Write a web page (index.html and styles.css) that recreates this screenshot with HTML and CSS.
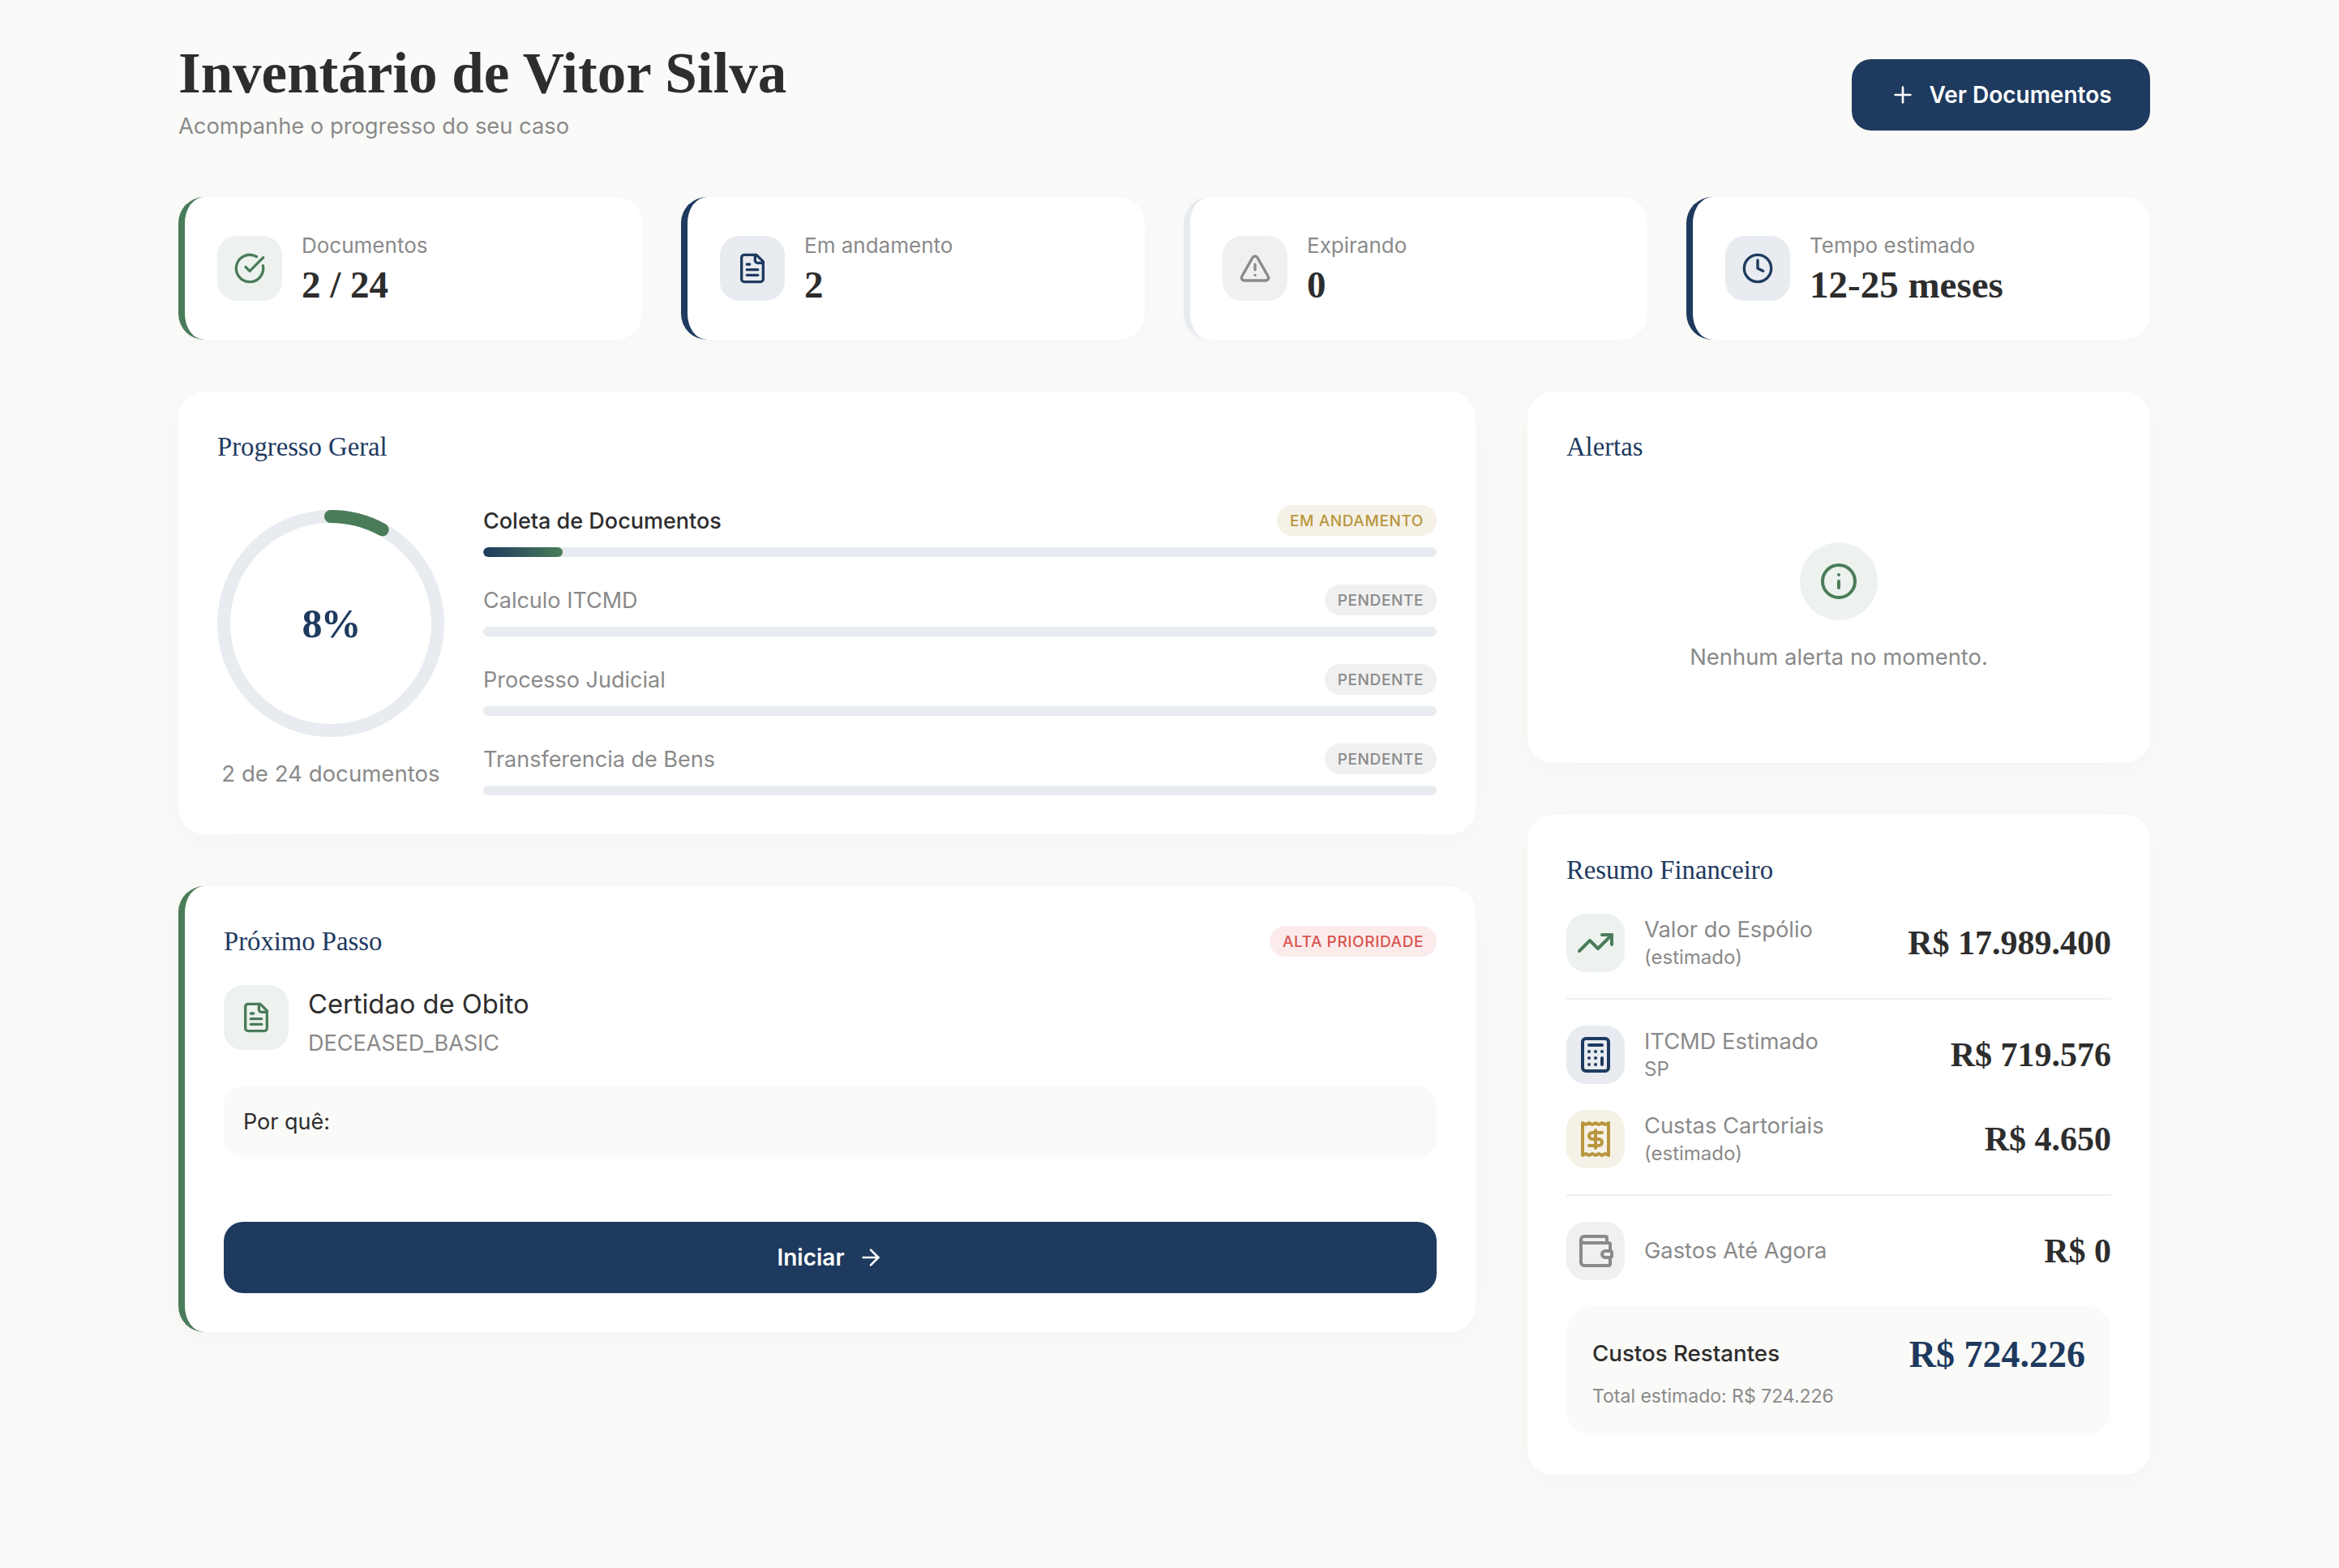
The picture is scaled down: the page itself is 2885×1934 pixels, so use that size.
FILE: index.html
```html
<!DOCTYPE html>
<html lang="pt-BR">

<head>
    <meta charset="UTF-8">
    <title>Inventário de Vitor Silva</title>
    <link rel="stylesheet" href="styles.css">
</head>

<body>
    <div class="page">
        <header class="page-header">
            <div class="title-block">
                <h1>Inventário de Vitor Silva</h1>
                <p class="subtitle">Acompanhe o progresso do seu caso</p>
            </div>
            <button class="btn header-btn">
                <svg class="icon icon-sm" viewBox="0 0 24 24"><path d="M5 12h14"/><path d="M12 5v14"/></svg>
                Ver Documentos
            </button>
        </header>

        <section class="stats">
            <div class="stat-card border-green">
                <div class="icon-box box-green">
                    <svg class="icon" viewBox="0 0 24 24"><path d="M21.801 10A10 10 0 1 1 17 3.335"/><path d="m9 11 3 3L22 4"/></svg>
                </div>
                <div>
                    <p class="stat-label">Documentos</p>
                    <p class="stat-value">2 / 24</p>
                </div>
            </div>
            <div class="stat-card border-navy">
                <div class="icon-box box-navy">
                    <svg class="icon" viewBox="0 0 24 24"><path d="M15 2H6a2 2 0 0 0-2 2v16a2 2 0 0 0 2 2h12a2 2 0 0 0 2-2V7Z"/><path d="M14 2v4a2 2 0 0 0 2 2h4"/><path d="M10 9H8"/><path d="M16 13H8"/><path d="M16 17H8"/></svg>
                </div>
                <div>
                    <p class="stat-label">Em andamento</p>
                    <p class="stat-value">2</p>
                </div>
            </div>
            <div class="stat-card border-grey">
                <div class="icon-box box-grey">
                    <svg class="icon" viewBox="0 0 24 24"><path d="m21.73 18-8-14a2 2 0 0 0-3.48 0l-8 14A2 2 0 0 0 4 21h16a2 2 0 0 0 1.73-3"/><path d="M12 9v4"/><path d="M12 17h.01"/></svg>
                </div>
                <div>
                    <p class="stat-label">Expirando</p>
                    <p class="stat-value">0</p>
                </div>
            </div>
            <div class="stat-card border-navy">
                <div class="icon-box box-navy">
                    <svg class="icon" viewBox="0 0 24 24"><circle cx="12" cy="12" r="10"/><path d="M12 6v6l4 2"/></svg>
                </div>
                <div>
                    <p class="stat-label">Tempo estimado</p>
                    <p class="stat-value">12-25 meses</p>
                </div>
            </div>
        </section>

        <div class="main-grid">
            <div class="column">
                <section class="panel">
                    <h2>Progresso Geral</h2>
                    <div class="progress-body">
                        <div class="ring-col">
                            <div class="ring">
                                <svg viewBox="0 0 280 280">
                                    <circle class="ring-track" cx="140" cy="140" r="132"/>
                                    <path class="ring-fill" d="M140 8A132 132 0 0 1 203.6 24.3"/>
                                </svg>
                                <span class="ring-text">8%</span>
                            </div>
                            <p class="ring-caption">2 de 24 documentos</p>
                        </div>
                        <div class="steps">
                            <div class="step">
                                <div class="step-head">
                                    <span class="step-name active">Coleta de Documentos</span>
                                    <span class="badge badge-gold">EM ANDAMENTO</span>
                                </div>
                                <div class="bar"><div class="bar-fill" style="width: 8.33%"></div></div>
                            </div>
                            <div class="step">
                                <div class="step-head">
                                    <span class="step-name">Calculo ITCMD</span>
                                    <span class="badge badge-grey">PENDENTE</span>
                                </div>
                                <div class="bar"></div>
                            </div>
                            <div class="step">
                                <div class="step-head">
                                    <span class="step-name">Processo Judicial</span>
                                    <span class="badge badge-grey">PENDENTE</span>
                                </div>
                                <div class="bar"></div>
                            </div>
                            <div class="step">
                                <div class="step-head">
                                    <span class="step-name">Transferencia de Bens</span>
                                    <span class="badge badge-grey">PENDENTE</span>
                                </div>
                                <div class="bar"></div>
                            </div>
                        </div>
                    </div>
                </section>

                <section class="panel panel-next">
                    <div class="next-head">
                        <h2>Próximo Passo</h2>
                        <span class="badge badge-red">ALTA PRIORIDADE</span>
                    </div>
                    <div class="doc-row">
                        <div class="icon-box box-green">
                            <svg class="icon" viewBox="0 0 24 24"><path d="M15 2H6a2 2 0 0 0-2 2v16a2 2 0 0 0 2 2h12a2 2 0 0 0 2-2V7Z"/><path d="M14 2v4a2 2 0 0 0 2 2h4"/><path d="M10 9H8"/><path d="M16 13H8"/><path d="M16 17H8"/></svg>
                        </div>
                        <div class="doc-text">
                            <p class="doc-name">Certidao de Obito</p>
                            <p class="doc-code">DECEASED_BASIC</p>
                        </div>
                    </div>
                    <div class="why-box">Por quê:</div>
                    <button class="btn start-btn">
                        Iniciar
                        <svg class="icon icon-sm" viewBox="0 0 24 24"><path d="M5 12h14"/><path d="m12 5 7 7-7 7"/></svg>
                    </button>
                </section>
            </div>

            <div class="column">
                <section class="panel panel-alerts">
                    <h2>Alertas</h2>
                    <div class="empty-alerts">
                        <div class="info-circle">
                            <svg class="icon" viewBox="0 0 24 24"><circle cx="12" cy="12" r="10"/><path d="M12 16v-4"/><path d="M12 8h.01"/></svg>
                        </div>
                        <p>Nenhum alerta no momento.</p>
                    </div>
                </section>

                <section class="panel">
                    <h2>Resumo Financeiro</h2>
                    <div class="fin-list">
                        <div class="fin-row">
                            <div class="icon-box fin-icon box-green">
                                <svg class="icon" viewBox="0 0 24 24"><path d="M22 7 13.5 15.5 8.5 10.5 2 17"/><path d="M16 7h6v6"/></svg>
                            </div>
                            <div class="fin-text">
                                <p class="fin-label">Valor do Espólio</p>
                                <p class="fin-sub">(estimado)</p>
                            </div>
                            <span class="fin-value">R$ 17.989.400</span>
                        </div>
                        <hr class="fin-divider">
                        <div class="fin-row">
                            <div class="icon-box fin-icon box-navy">
                                <svg class="icon" viewBox="0 0 24 24"><rect width="16" height="20" x="4" y="2" rx="2"/><path d="M8 6h8"/><path d="M16 14v4"/><path d="M16 10h.01"/><path d="M12 10h.01"/><path d="M8 10h.01"/><path d="M12 14h.01"/><path d="M8 14h.01"/><path d="M12 18h.01"/><path d="M8 18h.01"/></svg>
                            </div>
                            <div class="fin-text">
                                <p class="fin-label">ITCMD Estimado</p>
                                <p class="fin-sub">SP</p>
                            </div>
                            <span class="fin-value">R$ 719.576</span>
                        </div>
                        <div class="fin-row">
                            <div class="icon-box fin-icon box-gold">
                                <svg class="icon" viewBox="0 0 24 24"><path d="M4 2v20l2-1 2 1 2-1 2 1 2-1 2 1 2-1 2 1V2l-2 1-2-1-2 1-2-1-2 1-2-1-2 1Z"/><path d="M16 8h-6a2 2 0 1 0 0 4h4a2 2 0 1 1 0 4H8"/><path d="M12 17.5v-11"/></svg>
                            </div>
                            <div class="fin-text">
                                <p class="fin-label">Custas Cartoriais</p>
                                <p class="fin-sub">(estimado)</p>
                            </div>
                            <span class="fin-value">R$ 4.650</span>
                        </div>
                        <hr class="fin-divider">
                        <div class="fin-row">
                            <div class="icon-box fin-icon box-grey">
                                <svg class="icon" viewBox="0 0 24 24"><path d="M19 7V4a1 1 0 0 0-1-1H5a2 2 0 0 0 0 4h15a1 1 0 0 1 1 1v4h-3a2 2 0 0 0 0 4h3a1 1 0 0 0 1-1v-2a1 1 0 0 0-1-1"/><path d="M3 5v14a2 2 0 0 0 2 2h15a1 1 0 0 0 1-1v-4"/></svg>
                            </div>
                            <div class="fin-text">
                                <p class="fin-label">Gastos Até Agora</p>
                            </div>
                            <span class="fin-value">R$ 0</span>
                        </div>
                    </div>
                    <div class="remaining">
                        <div class="remaining-top">
                            <span class="remaining-label">Custos Restantes</span>
                            <span class="remaining-value">R$ 724.226</span>
                        </div>
                        <p class="remaining-sub">Total estimado: R$ 724.226</p>
                    </div>
                </section>
            </div>
        </div>
    </div>
</body>

</html>
```

FILE: styles.css
```css
* {
    box-sizing: border-box;
}

body {
    margin: 0;
    background: #fafaf8;
    color: #2d2d2d;
    font-family: "Inter", "Liberation Sans", sans-serif;
}

p,
h1,
h2 {
    margin: 0;
}

.page {
    width: 2432px;
    margin-left: 220px;
    padding: 51px 0 80px;
}

/* header */

.page-header {
    display: flex;
    justify-content: space-between;
    align-items: center;
    height: 132px;
    margin-bottom: 60px;
}

.title-block {
    padding-bottom: 8px;
}

h1 {
    font-family: "Liberation Serif", serif;
    font-size: 71px;
    font-weight: 700;
    line-height: 78px;
    color: #2d2d2d;
}

.subtitle {
    margin-top: 8px;
    font-size: 27.3px;
    line-height: 38px;
    color: #8a8a8a;
}

.btn {
    display: flex;
    align-items: center;
    justify-content: center;
    height: 88px;
    border: none;
    border-radius: 24px;
    background: #1e3a5f;
    color: #fff;
    font-family: inherit;
    font-size: 28px;
    font-weight: 600;
}

.header-btn {
    width: 368px;
    gap: 16px;
}

.start-btn {
    width: 100%;
    gap: 16px;
    margin-top: 80px;
}

/* icons */

.icon {
    width: 40px;
    height: 40px;
    fill: none;
    stroke: currentColor;
    stroke-width: 2;
    stroke-linecap: round;
    stroke-linejoin: round;
}

.icon-sm {
    width: 32px;
    height: 32px;
}

.icon-box {
    display: flex;
    align-items: center;
    justify-content: center;
    flex-shrink: 0;
    width: 80px;
    height: 80px;
    border-radius: 24px;
}

.box-green {
    background: #edf2ef;
    color: #4a7c59;
}

.box-navy {
    background: #e8ebf0;
    color: #1e3a5f;
}

.box-grey {
    background: #f0f0f0;
    color: #8a8a8a;
}

.box-gold {
    background: #f5f1e6;
    color: #b8963e;
}

/* stat cards */

.stats {
    display: grid;
    grid-template-columns: repeat(4, 572px);
    gap: 48px;
    margin-bottom: 64px;
}

.stat-card {
    display: flex;
    align-items: center;
    gap: 24px;
    height: 176px;
    padding-left: 40px;
    background: #fff;
    border-left: 8px solid;
    border-radius: 32px;
    box-shadow: 0 4px 24px rgba(0, 0, 0, 0.02);
}

.border-green {
    border-left-color: #4a7c59;
}

.border-navy {
    border-left-color: #1e3a5f;
}

.border-grey {
    border-left-color: #e8ebf0;
}

.stat-label {
    font-size: 26px;
    line-height: 36px;
    color: #8a8a8a;
}

.stat-value {
    margin-top: 4px;
    font-family: "Liberation Serif", serif;
    font-size: 47px;
    font-weight: 700;
    line-height: 52px;
    color: #2d2d2d;
}

/* layout */

.main-grid {
    display: grid;
    grid-template-columns: 1600px 768px;
    gap: 64px;
    align-items: start;
}

.column {
    display: flex;
    flex-direction: column;
    gap: 64px;
}

.panel {
    padding: 48px;
    background: #fff;
    border-radius: 32px;
    box-shadow: 0 8px 40px rgba(0, 0, 0, 0.03);
}

h2 {
    font-family: "Liberation Serif", serif;
    font-size: 32.7px;
    font-weight: 400;
    line-height: 40px;
    color: #1e3a5f;
}

/* progress */

.progress-body {
    display: flex;
    align-items: center;
    gap: 48px;
    margin-top: 52px;
}

.ring-col {
    flex-shrink: 0;
    width: 280px;
    margin-bottom: 3px;
    text-align: center;
}

.ring {
    position: relative;
    width: 280px;
    height: 280px;
}

.ring svg {
    display: block;
    fill: none;
    stroke-width: 16;
}

.ring-track {
    stroke: #e8ebf0;
}

.ring-fill {
    stroke: #4a7c59;
    stroke-linecap: round;
}

.ring-text {
    position: absolute;
    top: 50%;
    left: 50%;
    transform: translate(-50%, -50%);
    font-family: "Liberation Serif", serif;
    font-size: 50px;
    font-weight: 700;
    letter-spacing: -2px;
    color: #1e3a5f;
}

.ring-caption {
    margin-top: 27px;
    font-size: 27.6px;
    line-height: 36px;
    color: #8a8a8a;
    white-space: nowrap;
}

.steps {
    flex: 1;
    display: flex;
    flex-direction: column;
    gap: 34px;
}

.step-head {
    display: flex;
    justify-content: space-between;
    align-items: center;
    margin-bottom: 14px;
}

.step-name {
    font-size: 27px;
    color: #8a8a8a;
}

.step-name.active {
    font-weight: 500;
    color: #2d2d2d;
}

.badge {
    display: inline-flex;
    align-items: center;
    height: 38px;
    padding: 0 16px;
    border-radius: 19px;
    font-size: 19px;
    font-weight: 500;
    letter-spacing: 0.6px;
}

.badge-gold {
    background: #f5f1e6;
    color: #b8963e;
}

.badge-grey {
    background: #f0f0f0;
    color: #8a8a8a;
}

.badge-red {
    background: #fbeceb;
    color: #d9534f;
}

.bar {
    height: 12px;
    border-radius: 6px;
    background: #e8ebf0;
    overflow: hidden;
}

.bar-fill {
    height: 100%;
    border-radius: 6px;
    background: linear-gradient(90deg, #1e3a5f, #4a7c59);
}

/* next step */

.panel-next {
    border-left: 8px solid #4a7c59;
}

.next-head {
    display: flex;
    justify-content: space-between;
    align-items: center;
}

.doc-row {
    display: flex;
    align-items: flex-start;
    gap: 24px;
    margin-top: 34px;
}

.doc-text {
    padding-top: 1px;
}

.doc-name {
    font-size: 32.7px;
    line-height: 44px;
}

.doc-code {
    margin-top: 8px;
    font-size: 27px;
    line-height: 38px;
    color: #8a8a8a;
}

.why-box {
    display: flex;
    align-items: center;
    height: 88px;
    margin-top: 33px;
    padding: 0 24px;
    border-radius: 24px;
    background: #fafaf8;
    font-size: 27px;
}

/* alerts */

.panel-alerts {
    height: 458px;
}

.empty-alerts {
    display: flex;
    flex-direction: column;
    align-items: center;
    margin-top: 98px;
    font-size: 27.4px;
    color: #8a8a8a;
}

.info-circle {
    display: flex;
    align-items: center;
    justify-content: center;
    width: 96px;
    height: 96px;
    border-radius: 50%;
    background: #edf2ef;
    color: #4a7c59;
}

.info-circle .icon {
    width: 48px;
    height: 48px;
}

.empty-alerts p {
    margin-top: 27px;
    line-height: 36px;
}

/* financial summary */

.fin-list {
    display: flex;
    flex-direction: column;
    gap: 32px;
    margin-top: 34px;
}

.fin-row {
    display: flex;
    align-items: center;
    gap: 24px;
}

.fin-icon {
    width: 72px;
    height: 72px;
}

.fin-icon .icon {
    width: 48px;
    height: 48px;
}

.fin-text {
    flex: 1;
}

.fin-label {
    font-size: 27.3px;
    line-height: 36px;
    color: #8a8a8a;
}

.fin-sub {
    font-size: 24px;
    line-height: 32px;
    color: #8a8a8a;
}

.fin-value {
    font-family: "Liberation Serif", serif;
    font-size: 42px;
    font-weight: 700;
    white-space: nowrap;
}

.fin-divider {
    width: 100%;
    height: 2px;
    margin: 0;
    border: none;
    background: #f0f0f0;
}

.remaining {
    height: 160px;
    margin-top: 32px;
    padding: 32px;
    border-radius: 32px;
    background: #fafaf8;
}

.remaining-top {
    display: flex;
    justify-content: space-between;
    align-items: center;
}

.remaining-label {
    margin-bottom: 4px;
    font-size: 27.7px;
    font-weight: 500;
}

.remaining-value {
    font-family: "Liberation Serif", serif;
    font-size: 46px;
    font-weight: 700;
    line-height: 56px;
    color: #1e3a5f;
}

.remaining-sub {
    margin-top: 7px;
    font-size: 23px;
    line-height: 32px;
    color: #8a8a8a;
}
```
